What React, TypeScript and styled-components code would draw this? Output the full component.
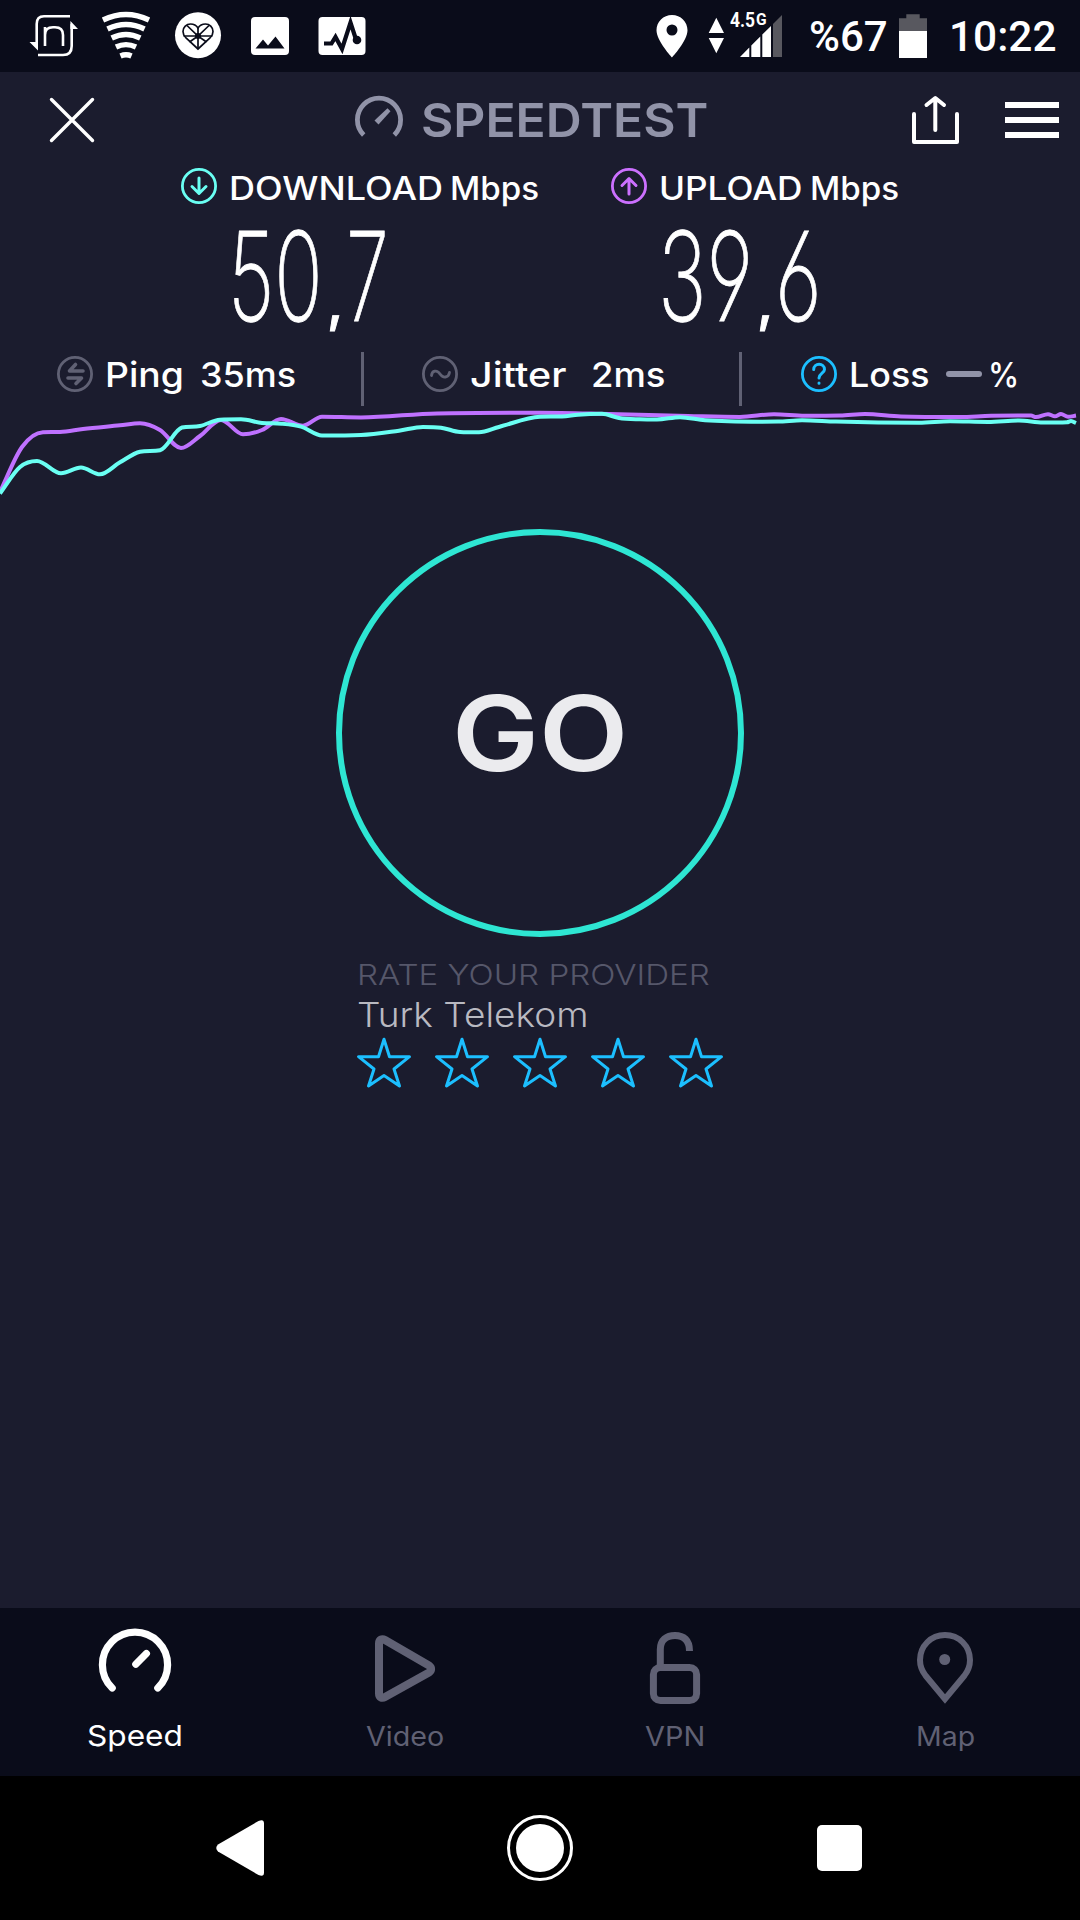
import React, { useLayoutEffect, useRef, useState } from "react";
import styled, { createGlobalStyle } from "styled-components";

const GlobalStyle = createGlobalStyle`
  * { box-sizing: border-box; }
  body { margin: 0; background: #000; font-family: Inter, "Noto Sans", sans-serif; }
  button { background: none; border: 0; padding: 0; font: inherit; color: inherit; }
  svg { display: block; overflow: visible; flex: none; }
`;

const c = {
  bar: "#0a0c1a",
  page: "#1b1c2e",
  muted: "#9193a8",
  dim: "#606174",
  teal: "#6afff3",
  purple: "#bf71ff",
  blue: "#1cbfff",
};

/* Text stretched horizontally to an exact width */
const FitBox = styled.span<{ $w: number; $ml?: number }>`
  display: block;
  flex: none;
  width: ${(p) => p.$w}px;
  margin-left: ${(p) => p.$ml ?? 0}px;
  text-align: left;
  white-space: pre;
`;
const FitInner = styled.span`
  display: inline-block;
  transform-origin: 0 50%;
`;
function Fit({ w, ml, children }: { w: number; ml?: number; children: React.ReactNode }) {
  const ref = useRef<HTMLSpanElement>(null);
  const [scale, setScale] = useState(1);
  useLayoutEffect(() => {
    if (ref.current) setScale(w / ref.current.offsetWidth);
  }, [w]);
  return (
    <FitBox $w={w} $ml={ml}>
      <FitInner ref={ref} style={{ transform: `scaleX(${scale})` }}>
        {children}
      </FitInner>
    </FitBox>
  );
}

const Screen = styled.div`
  width: 1080px;
  height: 1920px;
  display: flex;
  flex-direction: column;
  background: ${c.page};
  color: #fff;
  overflow: hidden;
`;

const StatusBar = styled.div`
  height: 72px;
  flex: none;
  display: flex;
  justify-content: space-between;
  background: ${c.bar};
  font-family: Roboto, sans-serif;
`;
const StatusGroup = styled.div`
  display: flex;
`;
const Clock = styled.div`
  display: flex;
  font-size: 42px;
  font-weight: 500;
  line-height: 72px;
  padding-top: 1px;
`;
const Network = styled.div`
  position: relative;
  width: 76px;
  margin: 0 26px 0 20px;
`;
const NetworkType = styled.span`
  position: absolute;
  left: 22px;
  top: 11px;
  display: flex;
  font-size: 19.5px;
  line-height: 20px;
  font-weight: 700;
`;
const NetworkSuffix = styled.span`
  font-size: 17px;
  line-height: 17px;
  margin-left: 1px;
`;

const Header = styled.header`
  height: 96px;
  flex: none;
  display: flex;
  align-items: center;
  padding: 0 21px 0 50px;
`;
const Brand = styled.h1`
  display: flex;
  align-items: center;
  margin: 0 207px 0 261px;
  width: 350px;
  color: ${c.muted};
  font-size: 47px;
  font-weight: 560;
  line-height: 48px;
`;
const MenuButton = styled.button`
  width: 54px;
  height: 36px;
  margin-left: 46px;
  display: flex;
  flex-direction: column;
  justify-content: space-between;
`;
const MenuLine = styled.span`
  height: 6px;
  background: #fff;
`;

const Speeds = styled.section`
  display: grid;
  grid-template-columns: 430px 430px;
  padding-left: 181px;
  height: 184px;
  flex: none;
`;
const SpeedTitle = styled.div`
  display: flex;
  height: 36px;
  font-size: 32px;
  font-weight: 550;
  line-height: 41px;
`;
const SpeedValue = styled.div`
  margin: 22px 0 0 47px;
  height: 100px;
  display: flex;
  font-size: 124px;
  line-height: 100px;
  font-weight: 200;
  -webkit-text-stroke: 0.9px #fff;
  font-feature-settings: "cv03", "cv04";
`;
const Comma = styled.span`
  display: block;
  margin: 26px 0 0 4px;
  font-size: 54px;
  font-weight: 500;
`;

const Stats = styled.section`
  height: 54px;
  flex: none;
  display: flex;
  align-items: flex-start;
  padding-left: 57px;
  font-size: 34.5px;
  font-weight: 550;
  line-height: 45px;
`;
const Stat = styled.div<{ $w: number }>`
  width: ${(p) => p.$w}px;
  display: flex;
  svg { margin-top: 4px; }
`;
const Rule = styled.div<{ $gap: number }>`
  width: 3px;
  height: 54px;
  margin-right: ${(p) => p.$gap}px;
  background: ${c.dim};
`;
const Dash = styled.div`
  width: 36px;
  height: 6px;
  margin: 19px 6px 0 16px;
  border-radius: 3px;
  background: ${c.muted};
`;

const GoButton = styled.button`
  width: 408px;
  height: 408px;
  flex: none;
  margin: 23px auto 0;
  && { border: 6px solid #2ee6d3; }
  border-radius: 50%;
  display: flex;
  align-items: center;
  justify-content: center;
  && { font-size: 105px; font-weight: 620; line-height: 120px; color: #ebebee; }
`;

const Rating = styled.section`
  width: 366px;
  margin: 23px auto 0;
  display: flex;
  flex-direction: column;
`;
const RatingHint = styled.div`
  height: 29px;
  font-size: 29px;
  line-height: 29px;
  font-weight: 300;
  color: #56576a;
`;
const Provider = styled.div`
  height: 49px;
  padding-top: 2px;
  font-size: 34px;
  line-height: 47px;
  font-weight: 300;
  color: #b9b9c1;
`;
const Stars = styled.div`
  display: flex;
  gap: 24px;
`;

const Tabs = styled.nav`
  margin-top: auto;
  height: 168px;
  flex: none;
  display: grid;
  grid-template-columns: repeat(4, 1fr);
  background: ${c.bar};
`;
const Tab = styled.button<{ $active?: boolean }>`
  display: flex;
  flex-direction: column;
  align-items: center;
  && {
    padding-top: 20px;
    color: ${(p) => (p.$active ? "#fff" : c.dim)};
    font-size: ${(p) => (p.$active ? 29 : 26.5)}px;
    font-weight: 400;
    line-height: ${(p) => (p.$active ? 39 : 41)}px;
  }
  svg { margin-bottom: 8px; }
`;

const SystemNav = styled.nav`
  height: 144px;
  flex: none;
  background: #000;
  display: flex;
  align-items: center;
  padding-left: 216px;
`;
const HomeButton = styled.button`
  width: 66px;
  height: 66px;
  margin: 0 244px 0 243px;
  && { border: 3px solid #fff; padding: 6px; }
  border-radius: 50%;
`;
const HomeDot = styled.span`
  display: block;
  width: 48px;
  height: 48px;
  border-radius: 50%;
  background: #fff;
`;
const RecentsButton = styled.button`
  width: 45px;
  height: 46px;
  && { background: #fff; }
  border-radius: 5px;
`;

type Pt = [number, number];
const uploadTrace: Pt[] = [
  [0, 492], [22, 447], [43, 432.2], [60, 432], [83, 429], [120, 425.3], [140, 423.2], [160, 430], [181, 448], [200, 436],
  [221, 420], [243, 434.3], [262, 430], [281, 419], [303, 425.7], [322, 416.7], [361, 417.4], [437, 413.4], [540, 412.7],
  [609, 414], [688, 416], [740, 417], [774, 414.2], [805, 415.8], [840, 415.6], [865, 414], [901, 416.5], [960, 417],
  [991, 415.8], [1031, 415.6], [1036, 417], [1048, 414.2], [1055, 416.3], [1061, 414], [1068, 416.8], [1076, 415.6],
];
const downloadTrace: Pt[] = [
  [0, 493.5], [20, 467], [37, 461], [61, 473.3], [81, 467.5], [100, 474.3], [120, 462.3], [140, 451.7], [160, 450.3],
  [182, 427.5], [200, 426], [220, 419.7], [241, 419.3], [262, 423], [282, 423.7], [301, 426.7], [322, 435.5], [361, 435],
  [399, 430.7], [423, 427], [441, 427.7], [460, 432], [479, 432.3], [499, 427], [540, 416.7], [562, 416.5], [578, 414.7],
  [602, 413.8], [619, 418], [640, 419.3], [657, 419.5], [680, 417.2], [705, 420.3], [760, 421.7], [778, 421.6],
  [802, 420.2], [836, 421.6], [919, 422.8], [950, 421.3], [988, 421.9], [1019, 420.5], [1043, 422.6], [1067, 422.3],
  [1071, 420.9], [1076, 423],
];
function smooth(pts: Pt[], top: number) {
  const slope = (i: number) => {
    if (i === 0 || i === pts.length - 1) return null;
    const a = (pts[i][1] - pts[i - 1][1]) / (pts[i][0] - pts[i - 1][0]);
    const b = (pts[i + 1][1] - pts[i][1]) / (pts[i + 1][0] - pts[i][0]);
    if (a * b <= 0) return 0;
    const limit = 3 * Math.min(Math.abs(a), Math.abs(b));
    return Math.sign(a) * Math.min(Math.abs(a + b) / 2, limit);
  };
  let d = `M${pts[0][0]} ${pts[0][1] - top}`;
  for (let i = 1; i < pts.length; i++) {
    const [x0, y0] = pts[i - 1];
    const [x1, y1] = pts[i];
    const h = (x1 - x0) / 3;
    const line = (y1 - y0) / (x1 - x0);
    const s0 = slope(i - 1) ?? line;
    const s1 = slope(i) ?? line;
    d += `C${x0 + h} ${y0 + s0 * h - top} ${x1 - h} ${y1 - s1 * h - top} ${x1} ${y1 - top}`;
  }
  return d;
}

const arrowDown = "M18 10V25M11 18.5L18 25.5L25 18.5";
const arrowUp = "M18 26V11M11 17.5L18 10.5L25 17.5";
function RoundIcon({ color, d, w = 3 }: { color: string; d: string; w?: number }) {
  return (
    <svg width="36" height="36" viewBox="0 0 36 36" fill="none" stroke={color} strokeLinecap="round" strokeLinejoin="round">
      <circle cx="18" cy="18" r="16.6" strokeWidth="2.8" />
      <path d={d} strokeWidth={w} />
    </svg>
  );
}

function NotificationIcons() {
  return (
    <svg width="400" height="72" viewBox="0 0 400 72">
      <g fill="none" stroke="#fff" strokeWidth="2.6">
        <path d="M70 16.3H44Q36.7 16.3 36.7 24V45M38 55H63Q71.7 55 71.7 46V24" />
        <path d="M45 46V27M45 35Q45 27.3 53 27.3H55Q63 27.3 63 35V46" />
      </g>
      <path d="M70.4 21L78 29H70.4ZM29.5 42H38V50.5Z" fill="#fff" />
      <g fill="none" stroke="#fff" strokeWidth="5.4">
        <path d="M103 20Q126 9 149 20" />
        <path d="M107.500 29Q126 20 144.500 29" />
        <path d="M111.700 38Q126 31 140.300 38" />
        <path d="M116 47Q126 42.200 136 47" />
        <path d="M120.500 56Q126 53.600 131.500 56" />
      </g>
      <circle cx="198" cy="35.300" r="23" fill="#fff" />
      <g fill="none" stroke={c.bar} strokeWidth="1.700">
        <path d="M198 49L186 38Q183 35 183 31.500C183 27 186.500 24 190.500 24Q195.500 24 198 28Q200.500 24 205.500 24C209.500 24 213 27 213 31.500Q213 35 210 38Z" />
        <path d="M198 28V49M183.500 36H212.500M187 25.500L198 36L209 25.500M189.500 42L198 36L206.500 42" />
      </g>
      <circle cx="198" cy="36" r="3" fill={c.bar} />
      <rect x="251" y="17" width="38" height="38" rx="4" fill="#fff" />
      <path d="M255.500 48.500L263 39.500L268 45.500L275.500 36.500L284.500 48.500Z" fill={c.bar} />
      <rect x="318.500" y="17" width="47" height="38" rx="4" fill="#fff" />
      <path d="M324 43.500H331.500L335.500 37L342 49L350.500 22.500L356.500 41" fill="none" stroke={c.bar} strokeWidth="4.200" />
      <circle cx="357" cy="40" r="4.300" fill={c.bar} />
    </svg>
  );
}

const tabIcons = {
  speed: (
    <g strokeWidth="7.2" strokeLinecap="round">
      <path d="M17.200 60A32.600 32.600 0 1 1 62.800 60" />
      <path d="M40.800 36.300L51.400 25.500" />
    </g>
  ),
  video: <path strokeWidth="8" strokeLinejoin="round" d="M14 15.500C14 11.500 17 10.200 20 12L64 37.500C66.800 39.500 66.800 42.500 64 44.500L20 69C17 70.800 14 69.500 14 65.500Z" />,
  vpn: (
    <g strokeWidth="7">
      <rect x="18.400" y="39.500" width="43.200" height="33" rx="7" />
      <path d="M25.300 39.500V21.500C25.300 12 31.500 7.500 40 7.500S54.500 12 54.500 23" />
    </g>
  ),
  map: (
    <g strokeWidth="6">
      <path d="M40 71L20.500 47.500C17 43 15 38.500 15 32C15 18 26 7 40 7S65 18 65 32C65 38.500 63 43 59.500 47.500Z" />
      <circle cx="39.700" cy="31.500" r="5.500" fill="currentColor" stroke="none" />
    </g>
  ),
};
function TabIcon({ name }: { name: keyof typeof tabIcons }) {
  return (
    <svg width="80" height="80" viewBox="0 0 80 80" fill="none" stroke="currentColor">
      {tabIcons[name]}
    </svg>
  );
}

export default function App() {
  return (
    <Screen>
      <GlobalStyle />
      <StatusBar>
        <NotificationIcons />
        <StatusGroup>
          <svg width="32" height="72" viewBox="0 0 32 72">
            <path fill="#fff" fillRule="evenodd" d="M16 15C7.300 15 .5 21.700 .5 30.300C.5 41 16 57.500 16 57.500S31.500 41 31.500 30.300C31.500 21.700 24.700 15 16 15ZM16 24.500A5.500 5.500 0 1 1 16 35.500A5.500 5.500 0 1 1 16 24.500Z" />
          </svg>
          <Network>
            <svg width="76" height="72" viewBox="0 0 76 72">
              <path fill="#fff" d="M.700 33L8.300 17.700L16 33ZM.700 38L8.300 53.300L16 38ZM32 57L41.300 47.500V57ZM43.300 57V45.500L52.300 36.500V57ZM54.300 57V34.500L63 26V57Z" />
              <path fill="#58585f" d="M65 57V24L74 15V57Z" />
            </svg>
            <NetworkType>
              <Fit w={25}>4.5</Fit>
              <NetworkSuffix>
                <Fit w={11}>G</Fit>
              </NetworkSuffix>
            </NetworkType>
          </Network>
          <Clock>
            <Fit w={79} ml={-1}>%67</Fit>
          </Clock>
          <svg width="52" height="72" viewBox="0 0 52 72">
            <path fill="#58585f" d="M11 31V18.300H18.300V14.300H31.700V18.300H39V31Z" />
            <path fill="#fff" d="M11 31H39V58H11Z" />
          </svg>
          <Clock>
            <Fit w={108} ml={9}>10:22</Fit>
          </Clock>
          <svg width="23" height="72" />
        </StatusGroup>
      </StatusBar>

      <Header>
        <button aria-label="Close">
          <svg width="44" height="44" viewBox="0 0 44 44" stroke="#fff" strokeWidth="3.400" strokeLinecap="round">
            <path d="M1.500 1.500L42.500 42.500M42.500 1.500L1.500 42.500" />
          </svg>
        </button>
        <Brand>
          <svg width="48" height="48" viewBox="0 0 48 48" fill="none" stroke="currentColor">
            <path d="M8.700 39A21.600 21.600 0 1 1 39.300 39" strokeWidth="4.800" />
            <path d="M32.500 12.300L35.500 15.300L23.500 28.500L19.500 24.500Z" fill="currentColor" stroke="none" />
          </svg>
          <Fit w={287} ml={18}>SPEEDTEST</Fit>
        </Brand>
        <button aria-label="Share">
          <svg width="47" height="48" viewBox="0 0 47 48" fill="none" stroke="#fff" strokeWidth="4" strokeLinecap="round" strokeLinejoin="round">
            <path d="M2 18V46H45V18M23.300 34V2.500M14.500 9L23.300 2L32 9" />
          </svg>
        </button>
        <MenuButton aria-label="Menu">
          <MenuLine />
          <MenuLine />
          <MenuLine />
        </MenuButton>
      </Header>

      <Speeds>
        <div>
          <SpeedTitle>
            <RoundIcon color={c.teal} d={arrowDown} />
            <Fit w={214} ml={11.5}>DOWNLOAD</Fit>
            <Fit w={89} ml={7}>Mbps</Fit>
          </SpeedTitle>
          <SpeedValue>
            <Fit w={95}>50</Fit>
            <Comma>
              <Fit w={16}>,</Fit>
            </Comma>
            <Fit w={43} ml={3}>7</Fit>
          </SpeedValue>
        </div>
        <div>
          <SpeedTitle>
            <RoundIcon color="#cc70ff" d={arrowUp} />
            <Fit w={144} ml={11.5}>UPLOAD</Fit>
            <Fit w={89} ml={7}>Mbps</Fit>
          </SpeedTitle>
          <SpeedValue>
            <Fit w={95}>39</Fit>
            <Comma>
              <Fit w={16}>,</Fit>
            </Comma>
            <Fit w={47} ml={2}>6</Fit>
          </SpeedValue>
        </div>
      </Speeds>

      <Stats>
        <Stat $w={304}>
          <RoundIcon color={c.dim} w={3.6} d="M26 15H12.500L18.500 8.500M11 22H24.500L19 27.500" />
          <Fit w={79} ml={12}>Ping</Fit>
          <Fit w={96} ml={16}>35ms</Fit>
        </Stat>
        <Rule $gap={58} />
        <Stat $w={317}>
          <RoundIcon color={c.dim} w={2.8} d="M9.500 19.500C10 14.500 15 13.500 18 18S26.500 22 27.500 16.500" />
          <Fit w={96} ml={12}>Jitter</Fit>
          <Fit w={74} ml={25}>2ms</Fit>
        </Stat>
        <Rule $gap={59} />
        <Stat $w={240}>
          <RoundIcon color={c.blue} w={3} d="M12.700 13.500C12.700 6.500 23.500 6.500 23.500 13.500C23.500 17 18 17.500 18 22M18 27V27.200" />
          <Fit w={81} ml={12}>Loss</Fit>
          <Dash />
          <Fit w={31}>%</Fit>
        </Stat>
      </Stats>

      <svg width="1080" height="100" viewBox="0 0 1080 100" fill="none" strokeWidth="4">
        <path d={smooth(uploadTrace, 406)} stroke={c.purple} />
        <path d={smooth(downloadTrace, 406)} stroke={c.teal} />
      </svg>

      <GoButton>
        <Fit w={176}>GO</Fit>
      </GoButton>

      <Rating>
        <RatingHint>
          <Fit w={353}>RATE YOUR PROVIDER</Fit>
        </RatingHint>
        <Provider>
          <Fit w={232}>Turk Telekom</Fit>
        </Provider>
        <Stars>
          {[1, 2, 3, 4, 5].map((n) => (
            <svg key={n} width="54" height="50" viewBox="0 0 54 50" fill="none" stroke={c.blue} strokeWidth="3" strokeLinejoin="round">
              <path d="M27 1.300L32.500 18.700H52.500L37 31L42.500 48L27 37.500L11.500 48L17 31L1.500 18.700H21.500Z" />
            </svg>
          ))}
        </Stars>
      </Rating>

      <Tabs>
        <Tab $active>
          <TabIcon name="speed" />
          <Fit w={96}>Speed</Fit>
        </Tab>
        <Tab>
          <TabIcon name="video" />
          <Fit w={78}>Video</Fit>
        </Tab>
        <Tab>
          <TabIcon name="vpn" />
          <Fit w={60}>VPN</Fit>
        </Tab>
        <Tab>
          <TabIcon name="map" />
          <Fit w={59}>Map</Fit>
        </Tab>
      </Tabs>

      <SystemNav>
        <svg width="48" height="56" viewBox="0 0 48 56">
          <path fill="#fff" d="M42.500 1Q48-1.500 48 3.500V52.500Q48 57.500 42.500 55L2 31.500Q-1.500 28 2 24.500Z" />
        </svg>
        <HomeButton aria-label="Home">
          <HomeDot />
        </HomeButton>
        <RecentsButton aria-label="Recents" />
      </SystemNav>
    </Screen>
  );
}
